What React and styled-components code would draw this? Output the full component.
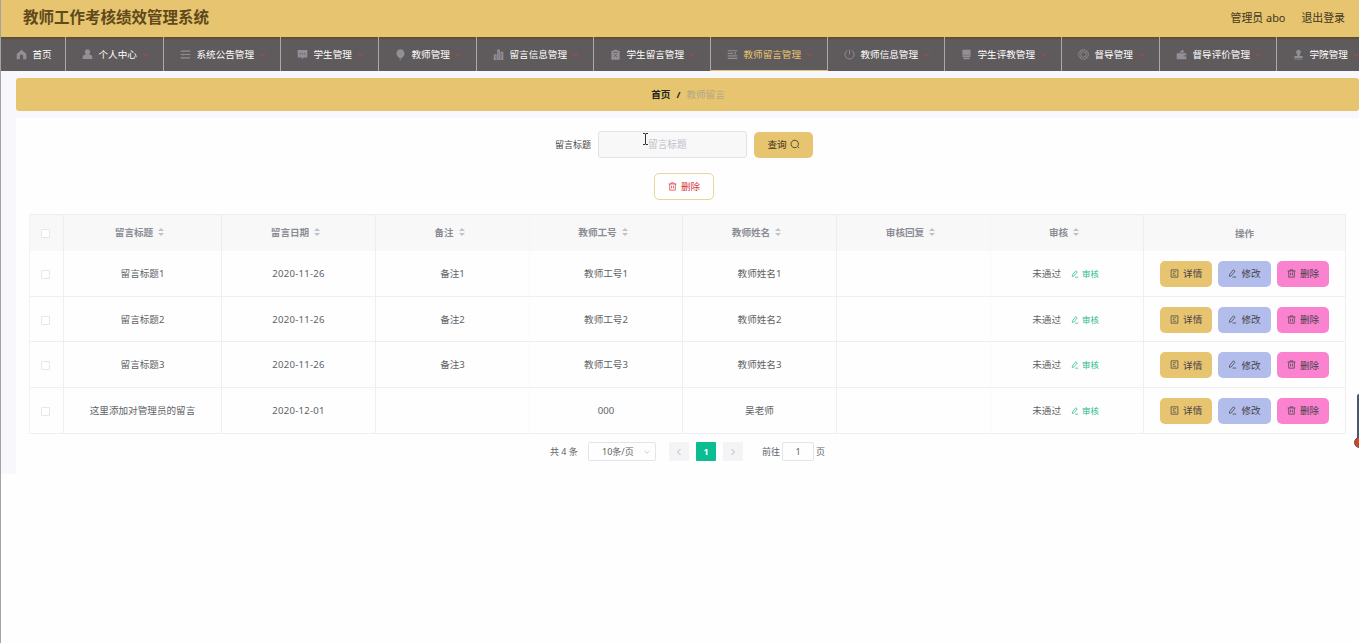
import React from 'react'
import styled, { createGlobalStyle, css } from 'styled-components'

const GlobalStyle = createGlobalStyle`
  * { box-sizing: border-box; }
  html { height: 100%; overflow: hidden; }
  body {
    margin: 0;
    height: 643px;
    overflow: hidden;
    background: #fefefe;
    font-family: "Noto Sans", "Noto Sans CJK SC", sans-serif;
    font-size: 9.6px;
    color: #606266;
  }
  button, input { font-family: inherit; }
`

const icons = {
  home: <path fill="currentColor" d="M8 1 1 7.2V15h4.6v-4.6a2.4 2.4 0 0 1 4.8 0V15H15V7.2z" />,
  user: <path fill="currentColor" d="M8 .5a4 4 0 0 1 2.200 7.300c2.800.6 4.800 1.700 4.800 3.700V14.500H1v-3c0-2 2-3.100 4.800-3.700A4 4 0 0 1 8 .5z" />,
  sliders: <path fill="none" stroke="currentColor" strokeWidth="1.700" d="M1 3h8M12 3h3M1 8h3M7 8h8M1 13h8M12 13h3M10.500 1.500v3M5.500 6.500v3M10.500 11.500v3" />,
  chat: (
    <>
      <path fill="currentColor" d="M1 1.500h14v11H9.500L8 14.500l-1.500-2H1z" />
      <path stroke="#5f5a5b" strokeWidth="1.400" d="M4 7h1.800M7.100 7h1.800M10.200 7H12" />
    </>
  ),
  bulb: <path fill="currentColor" d="M8 .5a6 6 0 0 1 3 11L10.200 13H5.800L5 11.500A6 6 0 0 1 8 .5zM6.500 14h3v1.500h-3z" />,
  chart: <path fill="none" stroke="currentColor" strokeWidth="1.800" d="M2 8.500h2.300V15H2zM6.900 1.500h2.300V15H6.900zM11.800 5h2.300v10h-2.300z" />,
  clipboard: (
    <>
      <path fill="currentColor" d="M2 2.500h3.500V1h5v1.500H14V15.500H2z" />
      <path stroke="#5f5a5b" strokeWidth="1.300" d="M5 5h6M6 7.500l4 4M10 7.500l-4 4" />
    </>
  ),
  list: <path fill="none" stroke="currentColor" strokeWidth="1.700" d="M1 2.500h14M1 6.300h8M1 10h14M1 13.700h14M12 4.500v3.500" />,
  power: <path fill="none" stroke="currentColor" strokeWidth="1.400" d="M8 1v7M5 2.100a6.600 6.600 0 1 0 6 0" />,
  print: (
    <>
      <path fill="currentColor" d="M2 1h12v10.500H2zM3.500 12.500h9v2.500h-9z" />
      <path stroke="#5f5a5b" strokeWidth=".7" d="M2 9h12" />
    </>
  ),
  help: (
    <g fill="none" stroke="currentColor" strokeWidth="1.300">
      <circle cx="8" cy="8" r="7" />
      <circle cx="8" cy="8" r="4" />
      <path d="m3 3 2.200 2.200M13 3l-2.200 2.200M3 13l2.200-2.200M13 13l-2.200-2.200" />
    </g>
  ),
  wallet: (
    <>
      <path fill="currentColor" d="M1 6h14v9H1zM4 5l6-4 2.500 4z" />
      <path stroke="#5f5a5b" strokeWidth="1.400" d="M11 10h4" />
    </>
  ),
  stamp: <path fill="currentColor" d="M8 1a3.600 3.600 0 0 1 2 6.500l-.5 2.500H14v3H2v-3h4.500L6 7.500A3.600 3.600 0 0 1 8 1zM2 14h12v1.200H2z" />,
  down: <path fill="none" stroke="currentColor" strokeWidth="2.200" d="m1.500 5 6.500 6 6.500-6" />,
  left: <path fill="none" stroke="currentColor" strokeWidth="2" d="m11 2-6 6 6 6" />,
  right: <path fill="none" stroke="currentColor" strokeWidth="2" d="m5 2 6 6-6 6" />,
  search: <path fill="none" stroke="currentColor" strokeWidth="1.300" d="M12 12a6 6 0 1 0-1.200 1M12 12l2.500 2.500" />,
  trash: <path fill="none" stroke="currentColor" strokeWidth="1.300" d="M1 3.500h14M5.500 3.500v-2h5v2M3 3.500v11h10v-11M6.300 6.500v5M9.700 6.500v5" />,
  doc: <path fill="none" stroke="currentColor" strokeWidth="1.300" d="M2 1.500h12v13H2zM5 5h6M5 8h3M5 11h6" />,
  edit: <path fill="none" stroke="currentColor" strokeWidth="1.400" d="m3 9.500 6.500-8 3 2.400-6.500 8L2.500 13zM8 14.300h6.500" />,
}

const Svg = styled.svg`
  flex: none;
  display: block;
  width: ${({ $size }) => $size}px;
  height: ${({ $size }) => $size}px;
`

const Icon = ({ name, size = 10 }) => (
  <Svg $size={size} viewBox="0 0 16 16">{icons[name]}</Svg>
)

const menus = [
  { icon: 'home', text: '首页', width: 66 },
  { icon: 'user', text: '个人中心', width: 98 },
  { icon: 'sliders', text: '系统公告管理', width: 117 },
  { icon: 'chat', text: '学生管理', width: 98 },
  { icon: 'bulb', text: '教师管理', width: 98 },
  { icon: 'chart', text: '留言信息管理', width: 117 },
  { icon: 'clipboard', text: '学生留言管理', width: 117 },
  { icon: 'list', text: '教师留言管理', width: 117, active: true },
  { icon: 'power', text: '教师信息管理', width: 117 },
  { icon: 'print', text: '学生评教管理', width: 117 },
  { icon: 'help', text: '督导管理', width: 98 },
  { icon: 'wallet', text: '督导评价管理', width: 117 },
  { icon: 'stamp', text: '学院管理', width: 98 },
]

const columns = ['留言标题', '留言日期', '备注', '教师工号', '教师姓名', '审核回复', '审核']
const colWidths = [34, 158, 154, 154, 153, 154, 154, 153, 202]

const rows = [
  ['留言标题1', '2020-11-26', '备注1', '教师工号1', '教师姓名1', ''],
  ['留言标题2', '2020-11-26', '备注2', '教师工号2', '教师姓名2', ''],
  ['留言标题3', '2020-11-26', '备注3', '教师工号3', '教师姓名3', ''],
  ['这里添加对管理员的留言', '2020-12-01', '', '000', '吴老师', ''],
]

const App = () => {
  return (
    <Page>
      <GlobalStyle />
      <Header>
        <Title>教师工作考核绩效管理系统</Title>
        <UserInfo>
          <span>管理员 abo</span>
          <span>退出登录</span>
        </UserInfo>
      </Header>
      <Nav>
        {menus.map((menu) => (
          <NavItem key={menu.text} $width={menu.width} $active={menu.active}>
            <MenuIcon><Icon name={menu.icon} size={11} /></MenuIcon>
            <span>{menu.text}</span>
            {menu.icon !== 'home' && <Arrow><Icon name="down" size={7} /></Arrow>}
          </NavItem>
        ))}
      </Nav>

      <Main>
        <Breadcrumb>
          <b>首页</b>
          <b>/</b>
          <span>教师留言</span>
        </Breadcrumb>
        <Panel>
          {/* search form */}
          <SearchRow>
            <label>留言标题</label>
            <SearchInput placeholder="留言标题" />
            <SearchButton>查询<Icon name="search" size={10} /></SearchButton>
          </SearchRow>
          <ActionRow>
            <DeleteButton><Icon name="trash" size={9} />删除</DeleteButton>
          </ActionRow>

          {/* table */}
          <Table>
            <colgroup>
              {colWidths.map((w, i) => <Col key={i} $width={w} />)}
            </colgroup>
            <thead>
              <tr>
                <Th><Checkbox /></Th>
                {columns.map((c) => (
                  <Th key={c} $faint={c === '备注' || c === '审核回复'}>
                    <HeadCell>{c}<Sort><i /><i /></Sort></HeadCell>
                  </Th>
                ))}
                <Th>操作</Th>
              </tr>
            </thead>
            <tbody>
              {rows.map((row) => (
                <tr key={row[0]}>
                  <Td><Checkbox /></Td>
                  {row.map((cell, i) => <Td key={i} $faint={i === 2 || i === 5} $date={i === 1}>{cell}</Td>)}
                  <Td>
                    <Status>
                      未通过
                      <Audit><Icon name="edit" size={8} />审核</Audit>
                    </Status>
                  </Td>
                  <Td>
                    <Operations>
                      <RowButton $bg="#e7c46f"><Icon name="doc" size={9} />详情</RowButton>
                      <RowButton $bg="#b3bdeb"><Icon name="edit" size={9} />修改</RowButton>
                      <RowButton $bg="#fa82cf"><Icon name="trash" size={9} />删除</RowButton>
                    </Operations>
                  </Td>
                </tr>
              ))}
            </tbody>
          </Table>

          {/* pagination */}
          <Pagination>
            <Total>共 4 条</Total>
            <PageSize><span>10条/页</span><Icon name="down" size={6} /></PageSize>
            <PageButton><Icon name="left" size={8} /></PageButton>
            <PageButton $active>1</PageButton>
            <PageButton><Icon name="right" size={8} /></PageButton>
            <Jump>前往<JumpBox>1</JumpBox>页</Jump>
          </Pagination>
        </Panel>
      </Main>

      <Cursor viewBox="0 0 7 12">
        <path d="M1 .5h2l.5.5.5-.5h2M3.500 1v10M1 11.500h2l.5-.5.5.5h2" fill="none" stroke="#333" />
      </Cursor>
      <SideBar />
      <SideDot />
    </Page>
  )
}

const Page = styled.div`
  position: relative;
  height: 643px;
  overflow: hidden;
  border-left: 1px solid #a3a3a5;
`

const Header = styled.header`
  display: flex;
  justify-content: space-between;
  align-items: center;
  height: 37px;
  padding: 0 14px 3px 22px;
  background: #e7c46f;
  color: #5e4a1b;
`

const Title = styled.h1`
  margin: 0;
  font-size: 15.5px;
  line-height: 20px;
  font-weight: 700;
`

const UserInfo = styled.div`
  display: flex;
  gap: 16px;
  margin-top: -1px;
  font-size: 10.9px;
  color: #40361f;
`

const Nav = styled.nav`
  display: flex;
  height: 34px;
  margin-left: -1px;
  overflow: hidden;
  background: linear-gradient(#5d4a25 0, #5f5a5b 3px);
  color: #fff;
`

const MenuIcon = styled.span`
  margin-right: 5.5px;
  color: #928f97;
`

const Arrow = styled.span`
  flex: none;
  width: 7px;
  margin-left: 5px;
  color: #c2434f;
`

const NavItem = styled.div`
  flex: none;
  display: flex;
  align-items: center;
  width: ${({ $width }) => $width}px;
  padding: 0 0 0 16px;
  border-right: 1px solid #aaa8a8;
  white-space: nowrap;
  ${({ $active }) => $active && css`
    padding-top: 1px;
    color: #e7c46f;
    border-bottom: 1px solid #e7c46f;
  `}
`

const Main = styled.main`
  height: 403px;
  padding: 7px 0 0 15px;
  background: #f7f7fc;
`

const Breadcrumb = styled.div`
  display: flex;
  justify-content: center;
  align-items: center;
  gap: 6px;
  height: 33px;
  padding-left: 1px;
  padding-bottom: 1px;
  border-radius: 3px;
  background: #e7c46f;
  b { color: #222; }
  span { color: #b3a78b; }
`

const Panel = styled.section`
  height: 356px;
  margin-top: 7px;
  padding: 13px 13px 0;
  background: #fefefe;
`

const SearchRow = styled.div`
  display: flex;
  align-items: center;
  height: 27px;
  padding-left: 526px;
  label {
    width: 43px;
    font-size: 9px;
    color: #444;
  }
`

const SearchInput = styled.input`
  width: 149px;
  height: 27px;
  padding: 0 10px;
  border: 1px solid #e2e3e7;
  border-radius: 3px;
  outline: none;
  background: #f8f8f9;
  font-size: 9.7px;
  text-indent: 39px;
  &::placeholder { color: #bfc1ca; }
`

const buttonBase = css`
  display: flex;
  justify-content: center;
  align-items: center;
  padding: 0;
  border: 0;
  border-radius: 5px;
  font-size: 9.6px;
  white-space: nowrap;
`

const SearchButton = styled.button`
  ${buttonBase}
  gap: 3px;
  width: 59px;
  height: 26px;
  margin: 0 0 0 7px;
  padding-bottom: 1px;
  background: #e7c46f;
  color: #3c3323;
`

const ActionRow = styled.div`
  display: flex;
  height: 27px;
  margin-top: 15px;
  padding-left: 625px;
`

const DeleteButton = styled.button`
  ${buttonBase}
  gap: 4px;
  width: 60px;
  height: 27px;
  padding-bottom: 1px;
  border: 1px solid #ecd59a;
  background: #fff;
  color: #d8373c;
`

const Table = styled.table`
  width: 1317px;
  margin-top: 14px;
  table-layout: fixed;
  border-collapse: separate;
  border-spacing: 0;
  border-top: 1px solid #efeff2;
  border-left: 1px solid #f2f2f4;
  text-align: center;
`

const Col = styled.col`
  width: ${({ $width }) => $width}px;
`

const Th = styled.th`
  height: 36px;
  padding: 0;
  border-right: 1px solid ${({ $faint }) => ($faint ? '#f5f5f7' : '#eeeef1')};
  background: #f8f8f9;
  color: #8b8d94;
  font-weight: 700;
`

const Td = styled.td`
  height: 45.7px;
  padding: 1px 0 0;
  line-height: 14px;
  border-right: 1px solid ${({ $faint }) => ($faint ? '#f9f9fa' : '#efeff2')};
  border-bottom: 1px solid #efeff2;
  letter-spacing: ${({ $date }) => ($date ? '0.25px' : 'normal')};
`

const Checkbox = styled.span`
  display: block;
  width: 9px;
  height: 9px;
  margin: 1px auto 0 11px;
  border: 1px solid #e6e7eb;
  border-radius: 1px;
  background: #fff;
`

const HeadCell = styled.div`
  display: flex;
  justify-content: center;
  align-items: center;
  gap: 5px;
  padding-bottom: 3px;
  padding-right: 6px;
`

const Sort = styled.span`
  display: flex;
  flex-direction: column;
  gap: 2px;
  i {
    border: 3px solid transparent;
    border-top: 0;
    border-bottom-color: #c0c2ca;
  }
  i + i {
    border-top: 3px solid #c0c2ca;
    border-bottom: 0;
  }
`

const Status = styled.div`
  display: flex;
  align-items: center;
  justify-content: center;
  gap: 10px;
  padding-right: 3px;
`

const Audit = styled.span`
  display: flex;
  align-items: center;
  gap: 3px;
  font-size: 8.4px;
  color: #1fb98c;
`

const Operations = styled.div`
  display: flex;
  gap: 6px;
  padding-left: 16px;
`

const RowButton = styled.button`
  ${buttonBase}
  gap: 4px;
  width: 52.4px;
  height: 26px;
  padding-bottom: 1px;
  background: ${({ $bg }) => $bg};
  color: #46424a;
`

const Pagination = styled.div`
  display: flex;
  align-items: center;
  height: 20px;
  margin-top: 8px;
  padding-left: 521px;
  font-size: 9px;
`

const Total = styled.span`
  width: 38px;
  white-space: nowrap;
`

const PageSize = styled.div`
  display: flex;
  align-items: center;
  justify-content: space-between;
  width: 68px;
  height: 19px;
  margin-right: 13px;
  padding: 0 5px 0 13px;
  border: 1px solid #e4e5ea;
  border-radius: 2px;
  svg { color: #c0c4cc; }
`

const PageButton = styled.span`
  display: flex;
  align-items: center;
  justify-content: center;
  width: 20px;
  height: 19px;
  margin-right: 7px;
  border-radius: 1px;
  background: ${({ $active }) => ($active ? '#0bbd90' : '#f4f4f6')};
  color: ${({ $active }) => ($active ? '#fff' : '#b5b8c0')};
  font-weight: 700;
`

const Jump = styled.div`
  display: flex;
  align-items: center;
  margin-left: 12px;
`

const JumpBox = styled.span`
  display: flex;
  align-items: center;
  justify-content: center;
  width: 32px;
  height: 19px;
  margin: 0 2px;
  border: 1px solid #e4e5ea;
  border-radius: 2px;
`

const Cursor = styled.svg`
  position: absolute;
  left: 641px;
  top: 133px;
  width: 7px;
  height: 12px;
`

const SideBar = styled.div`
  position: absolute;
  right: 0;
  top: 394px;
  width: 2px;
  height: 44px;
  border-radius: 2px 0 0 0;
  background: #46586a;
`

const SideDot = styled.div`
  position: absolute;
  right: -6px;
  top: 437px;
  width: 11px;
  height: 11px;
  border: 1px solid #5b5558;
  border-radius: 50%;
  background: #d9431f;
`

export default App
